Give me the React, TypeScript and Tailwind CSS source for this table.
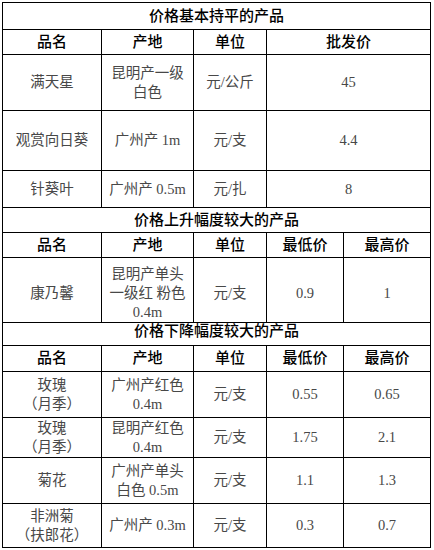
import React from "react";

// Flower wholesale price sheet — three sections sharing one 5-column grid.
type Cell = { lines: string[]; span?: 2 };
type Row =
  | { kind: "title"; h: string; text: string }
  | { kind: "head" | "data"; h: string; cells: Cell[]; pt?: string };

const c = (...lines: string[]): Cell => ({ lines });
const wide = (...lines: string[]): Cell => ({ lines, span: 2 });

const rows: Row[] = [
  { kind: "title", h: "h-[27px]", text: "价格基本持平的产品" },
  { kind: "head", h: "h-[25px]", cells: [c("品名"), c("产地"), c("单位"), wide("批发价")] },
  { kind: "data", h: "h-[56px]", cells: [c("满天星"), c("昆明产一级", "白色"), c("元/公斤"), wide("45")] },
  { kind: "data", h: "h-[60px]", cells: [c("观赏向日葵"), c("广州产 1m"), c("元/支"), wide("4.4")] },
  { kind: "data", h: "h-[37px]", cells: [c("针葵叶"), c("广州产 0.5m"), c("元/扎"), wide("8")] },

  { kind: "title", h: "h-[25px]", text: "价格上升幅度较大的产品" },
  { kind: "head", h: "h-[25px]", cells: [c("品名"), c("产地"), c("单位"), c("最低价"), c("最高价")] },
  {
    kind: "data",
    h: "h-[59px]",
    pt: "pt-[7px]",
    cells: [c("康乃馨"), c("昆明产单头", "一级红 粉色", "0.4m"), c("元/支"), c("0.9"), c("1")],
  },

  { kind: "title", h: "h-[29px]", text: "价格下降幅度较大的产品" },
  { kind: "head", h: "h-[26px]", cells: [c("品名"), c("产地"), c("单位"), c("最低价"), c("最高价")] },
  { kind: "data", h: "h-[46px]", cells: [c("玫瑰", "（月季）"), c("广州产红色", "0.4m"), c("元/支"), c("0.55"), c("0.65")] },
  { kind: "data", h: "h-[40px]", cells: [c("玫瑰", "（月季）"), c("昆明产红色", "0.4m"), c("元/支"), c("1.75"), c("2.1")] },
  { kind: "data", h: "h-[46px]", cells: [c("菊花"), c("广州产单头", "白色 0.5m"), c("元/支"), c("1.1"), c("1.3")] },
  { kind: "data", h: "h-[44px]", cells: [c("非洲菊", "（扶郎花）"), c("广州产 0.3m"), c("元/支"), c("0.3"), c("0.7")] },
];

const font = { fontFamily: '"Liberation Serif", "Noto Sans CJK SC", serif' };

export default function App() {
  return (
    <div className="min-h-[550px] w-[434px] bg-white pl-[2px] pt-[2px]" style={font}>
      <div className="w-[429px] border-l border-t border-black">
        {rows.map((r, i) =>
          r.kind === "title" ? (
            <div
              key={i}
              className={`${r.h} flex items-center justify-center border-b border-r border-black text-[15px] font-medium text-black`}
            >
              {r.text}
            </div>
          ) : (
            <div key={i} className={`${r.h} grid grid-cols-[99px_92px_73px_77px_87px]`}>
              {r.cells.map((cell, j) => (
                <div
                  key={j}
                  className={`${cell.span ? "col-span-2" : ""} flex items-center justify-center overflow-visible border-b border-r border-black text-center ${
                    r.kind === "head" ? "text-[15px] font-medium text-black" : "text-[14.5px] text-[#484848]"
                  } ${r.pt ?? ""}`}
                >
                  <div className="leading-[19px]">
                    {cell.lines.map((l, k) => (
                      <div key={k} className="whitespace-nowrap">
                        {l}
                      </div>
                    ))}
                  </div>
                </div>
              ))}
            </div>
          ),
        )}
      </div>
    </div>
  );
}
